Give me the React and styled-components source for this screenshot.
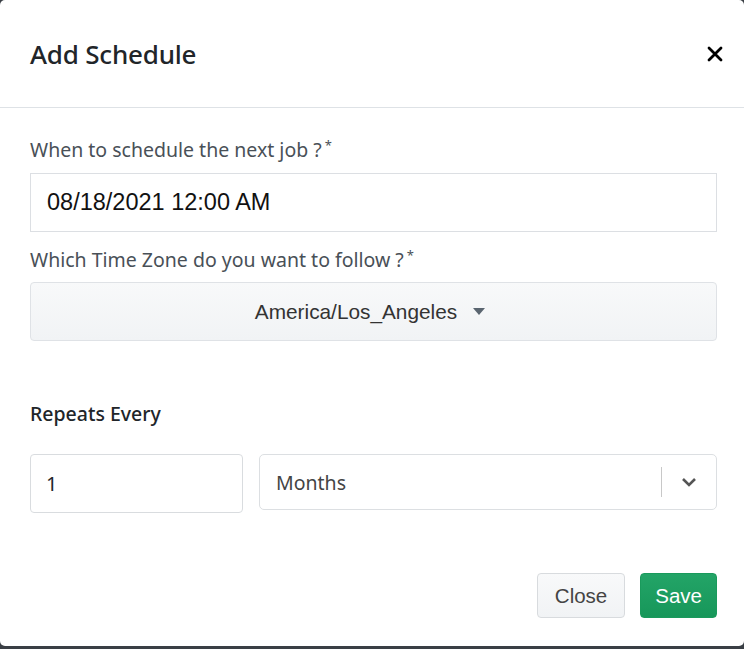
import React from "react"
import styled, { createGlobalStyle } from 'styled-components';

const Global = createGlobalStyle`
  html, body {
    margin: 0;
    padding: 0;
    background: #3a3f45;
  }
  body {
    font-family: "Noto Sans", "Open Sans", sans-serif;
  }
`;

const Modal = styled.div`
  width: 744px;
  height: 646px;
  background: #fff;
  border-radius: 5px;
  display: flex;
  flex-direction: column;
  overflow: hidden;
`;

const Header = styled.div`
  height: 108px;
  box-sizing: border-box;
  border-bottom: 1px solid #dee2e6;
  display: flex;
  align-items: center;
  justify-content: space-between;
  padding: 0 20px 0 30px;
`;

const Title = styled.h2`
  margin: 0;
  font-size: 26px;
  font-weight: 500;
  color: #212529;
  letter-spacing: -0.2px;
`;

const CloseX = styled.button`
  border: 0;
  background: none;
  padding: 0;
  width: 18px;
  height: 18px;
  display: flex;
  align-items: center;
  justify-content: center;
  cursor: pointer;
`;

const Body = styled.div`
  flex: 1;
  padding: 29px 27px 0 30px;
  display: flex;
  flex-direction: column;
`;

const Label = styled.label`
  display: block;
  font-size: 19.5px;
  color: #495057;
  line-height: 26px;
  height: 26px;
  margin-bottom: ${p => p.$gap || 10}px;
  sup {
    font-size: 13px;
    margin-left: 3px;
    vertical-align: top;
    line-height: 16px;
  }
`;

const DateInput = styled.div`
  height: 59px;
  box-sizing: border-box;
  border: 1px solid #dcdfe3;
  display: flex;
  align-items: center;
  padding-left: 16px;
  font-family: "Liberation Sans", Arial, sans-serif;
  font-size: 23.5px;
  color: #111;
  margin-bottom: 15px;
`;

const ZoneSelect = styled.div`
  height: 59px;
  box-sizing: border-box;
  border: 1px solid #dfe2e6;
  border-radius: 4px;
  background: linear-gradient(#f8f9fa, #f1f3f5);
  display: flex;
  align-items: center;
  justify-content: center;
  gap: 16px;
  font-family: "Liberation Sans", Arial, sans-serif;
  font-size: 20.8px;
  color: #333;
  padding-right: 7px;
`;

const Section = styled.div`
  margin-top: 60px;
  font-size: 19.5px;
  font-weight: 500;
  color: #212529;
  line-height: 26px;
`;

const RepeatRow = styled.div`
  display: flex;
  gap: 16px;
  margin-top: 27px;
  align-items: flex-start;
`;

const NumberBox = styled.div`
  width: 213px;
  height: 59px;
  box-sizing: border-box;
  border: 1px solid #d9dcdf;
  border-radius: 4px;
  display: flex;
  align-items: center;
  padding-left: 15px;
  font-size: 20px;
  color: #212529;
`;

const UnitSelect = styled.div`
  flex: 1;
  height: 56px;
  box-sizing: border-box;
  border: 1px solid #dcdfe2;
  border-radius: 5px;
  display: flex;
  align-items: center;
  padding-left: 16px;
  font-size: 19.5px;
  color: #444;
`;

const UnitText = styled.span`
  flex: 1;
`;

const Divider = styled.span`
  width: 1px;
  height: 30px;
  background: #c8c8c8;
`;

const Chevron = styled.span`
  width: 54px;
  display: flex;
  align-items: center;
  justify-content: center;
`;

const Footer = styled.div`
  display: flex;
  justify-content: flex-end;
  gap: 15px;
  padding: 0 27px 28px 0;
`;

const Button = styled.button`
  height: 45px;
  padding: 0 ${p => p.$primary ? 14 : 17}px;
  border-radius: 4px;
  font-family: "Liberation Sans", Arial, sans-serif;
  font-size: 20.5px;
  cursor: pointer;
  border: 1px solid ${p => p.$primary ? '#1a9a5c' : '#d8dbde'};
  background: ${p => p.$primary ? 'linear-gradient(#23a467, #17975a)' : 'linear-gradient(#f8f9fa, #f1f3f5)'};
  color: ${p => p.$primary ? '#fff' : '#444'};
`;

export default function App() {
  return (
    <>
      <Global />
      <Modal>
        <Header>
          <Title>Add Schedule</Title>
          <CloseX aria-label="close">
            <svg width="16" height="16" viewBox="0 0 16 16">
              <path d="M2 2 L14 14 M14 2 L2 14" stroke="#000" strokeWidth="2.8" strokeLinecap="round" />
            </svg>
          </CloseX>
        </Header>
        <Body>
          <Label>When to schedule the next job ?<sup>*</sup></Label>
          <DateInput>08/18/2021 12:00 AM</DateInput>
          <Label $gap={9}>Which Time Zone do you want to follow ?<sup>*</sup></Label>
          <ZoneSelect>
            <span>America/Los_Angeles</span>
            <svg width="12" height="7" viewBox="0 0 12 7">
              <path d="M0 0 L12 0 L6 7 Z" fill="#5a6570" />
            </svg>
          </ZoneSelect>
          <Section>Repeats Every</Section>
          <RepeatRow>
            <NumberBox>1</NumberBox>
            <UnitSelect>
              <UnitText>Months</UnitText>
              <Divider />
              <Chevron>
                <svg width="16" height="10" viewBox="0 0 16 10">
                  <path d="M2 2 L8 8 L14 2" fill="none" stroke="#555" strokeWidth="2.6" />
                </svg>
              </Chevron>
            </UnitSelect>
          </RepeatRow>
        </Body>
        <Footer>
          <Button>Close</Button>
          <Button $primary>Save</Button>
        </Footer>
      </Modal>
    </>
  )
}
